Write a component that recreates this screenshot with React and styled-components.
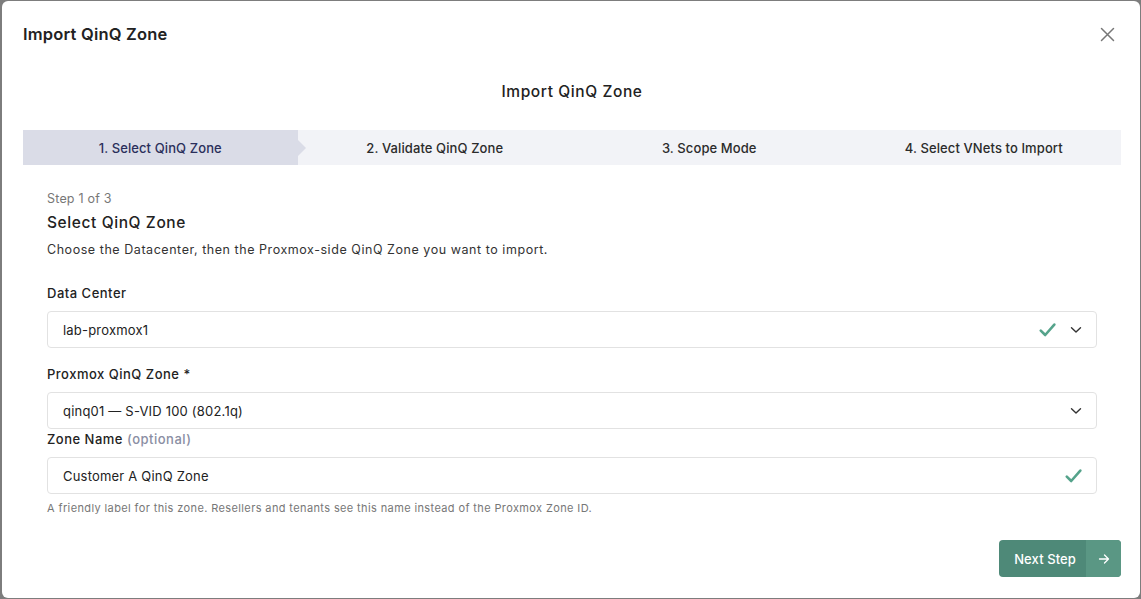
import React from "react";
import styled, { createGlobalStyle } from "styled-components";

const FONT = `"Inter", "Open Sans", "Noto Sans", sans-serif`;

const Global = createGlobalStyle`
  html, body { margin: 0; padding: 0; background: #7d7d7d; height: 100%; overflow: hidden; }
  body { font-family: ${FONT}; color: #222; }
  * { box-sizing: border-box; }
`;

const Backdrop = styled.div`
  padding: 1px 1px 0 2px;
  height: 599px;
`;

const Modal = styled.div`
  background: #fff;
  border-radius: 6px;
  height: 597px;
  padding: 0 19px 0 21px;
  display: flex;
  flex-direction: column;
`;

const Header = styled.div`
  height: 66px;
  display: flex;
  align-items: center;
  justify-content: space-between;
`;

const Title = styled.h2`
  margin: 0;
  font-size: 16.5px;
  font-weight: 600;
  color: #222;
  letter-spacing: 0.2px;
`;

const CloseBtn = styled.button`
  border: 0;
  background: none;
  padding: 0;
  margin-right: 6px;
  width: 16px;
  height: 16px;
  display: flex;
  align-items: center;
  justify-content: center;
  color: #777;
  cursor: pointer;
`;

const WizardTitle = styled.div`
  margin-top: 13px;
  text-align: center;
  font-size: 15.5px;
  font-weight: 500;
  line-height: 24px;
  letter-spacing: 0.6px;
  color: #222;
`;

const Stepper = styled.div`
  margin-top: 26px;
  display: grid;
  grid-template-columns: repeat(4, 1fr);
  background: #f2f3f7;
  height: 35px;
`;

const Step = styled.div`
  position: relative;
  display: flex;
  align-items: center;
  justify-content: center;
  font-size: 13px;
  font-weight: 500;
  letter-spacing: 0.1px;
  color: ${(p) => (p.$active ? "#2a2f5b" : "#2b2b2b")};
  background: ${(p) => (p.$active ? "#dadce7" : "transparent")};
  &::after {
    content: "";
    display: ${(p) => (p.$active ? "block" : "none")};
    position: absolute;
    right: -8px;
    top: 9.5px;
    border-top: 8px solid transparent;
    border-bottom: 8px solid transparent;
    border-left: 8px solid #dadce7;
  }
`;

const Body = styled.div`
  padding: 25px 24px 0 24px;
  display: flex;
  flex-direction: column;
`;

const StepCount = styled.div`
  font-size: 12.5px;
  line-height: 18px;
  letter-spacing: 0.2px;
  color: #777;
`;

const SectionTitle = styled.div`
  margin-top: 4px;
  font-size: 15.5px;
  line-height: 22px;
  font-weight: 500;
  letter-spacing: 0.6px;
  color: #222;
`;

const Desc = styled.div`
  margin-top: 7px;
  font-size: 12.5px;
  line-height: 18px;
  letter-spacing: 0.55px;
  color: #333;
`;

const Label = styled.div`
  margin-top: ${(p) => p.$mt}px;
  font-size: 13px;
  line-height: 18px;
  font-weight: 500;
  letter-spacing: 0.5px;
  color: #222;
`;

const Optional = styled.span`
  color: #8a8ea3;
`;

const Field = styled.div`
  margin-top: 9px;
  height: 37px;
  border: 1px solid #e2e2e2;
  border-radius: 4px;
  display: flex;
  align-items: center;
  padding: 0 14px 0 15px;
  font-size: 13px;
  letter-spacing: 0.2px;
  color: #222;
`;

const FieldValue = styled.span`
  flex: 1;
`;

const Icons = styled.div`
  display: flex;
  align-items: center;
  gap: 14px;
`;

const Help = styled.div`
  margin-top: 6px;
  font-size: 11px;
  line-height: 16px;
  letter-spacing: 0.38px;
  color: #777;
`;

const Footer = styled.div`
  margin-top: 24px;
  display: flex;
  justify-content: flex-end;
`;

const NextButton = styled.button`
  height: 37px;
  border: 0;
  border-radius: 4px;
  overflow: hidden;
  display: flex;
  padding: 0;
  background: #4e8978;
  color: #fff;
  font-family: ${FONT};
  font-size: 13px;
  font-weight: 500;
  letter-spacing: 0.1px;
  cursor: pointer;
`;

const BtnLabel = styled.span`
  display: flex;
  align-items: center;
  padding: 0 10px 0 15px;
`;

const BtnArrow = styled.span`
  width: 35px;
  display: flex;
  align-items: center;
  justify-content: center;
  background: #5a9784;
`;

const Check = () => (
  <svg width="17" height="14" viewBox="0 0 17 14" fill="none">
    <path d="M1.8 7.6 L6.2 12 L15.3 1.6" stroke="#55a38b" strokeWidth="2.6" strokeLinecap="round" strokeLinejoin="round" />
  </svg>
);

const Chevron = () => (
  <svg width="12" height="8" viewBox="0 0 12 8" fill="none">
    <path d="M1.5 1.8 L6 6 L10.5 1.8" stroke="#333" strokeWidth="1.4" strokeLinecap="round" strokeLinejoin="round" />
  </svg>
);

const steps = ["1. Select QinQ Zone", "2. Validate QinQ Zone", "3. Scope Mode", "4. Select VNets to Import"];

export default function App() {
  return (
    <>
      <Global />
      <Backdrop>
        <Modal>
          <Header>
            <Title>Import QinQ Zone</Title>
            <CloseBtn aria-label="Close">
              <svg width="15" height="15" viewBox="0 0 15 15" fill="none">
                <path d="M1.5 1.5 L13.5 13.5 M13.5 1.5 L1.5 13.5" stroke="#777" strokeWidth="1.5" strokeLinecap="round" />
              </svg>
            </CloseBtn>
          </Header>
          <WizardTitle>Import QinQ Zone</WizardTitle>
          <Stepper>
            {steps.map((s, i) => (
              <Step key={s} $active={i === 0}>{s}</Step>
            ))}
          </Stepper>
          <Body>
            <StepCount>Step 1 of 3</StepCount>
            <SectionTitle>Select QinQ Zone</SectionTitle>
            <Desc>Choose the Datacenter, then the Proxmox-side QinQ Zone you want to import.</Desc>

            <Label $mt={25}>Data Center</Label>
            <Field>
              <FieldValue>lab-proxmox1</FieldValue>
              <Icons><Check /><Chevron /></Icons>
            </Field>

            <Label $mt={17}>Proxmox QinQ Zone *</Label>
            <Field>
              <FieldValue>qinq01 — S-VID 100 (802.1q)</FieldValue>
              <Icons><Chevron /></Icons>
            </Field>

            <Label $mt={1}>Zone Name <Optional>(optional)</Optional></Label>
            <Field>
              <FieldValue>Customer A QinQ Zone</FieldValue>
              <Icons><Check /></Icons>
            </Field>
            <Help>A friendly label for this zone. Resellers and tenants see this name instead of the Proxmox Zone ID.</Help>
          </Body>
          <Footer>
            <NextButton>
              <BtnLabel>Next Step</BtnLabel>
              <BtnArrow>
                <svg width="12" height="12" viewBox="0 0 12 12" fill="none">
                  <path d="M1.5 6 H10.5 M6.5 2 L10.5 6 L6.5 10" stroke="#fff" strokeWidth="1.3" strokeLinecap="round" strokeLinejoin="round" />
                </svg>
              </BtnArrow>
            </NextButton>
          </Footer>
        </Modal>
      </Backdrop>
    </>
  );
}
